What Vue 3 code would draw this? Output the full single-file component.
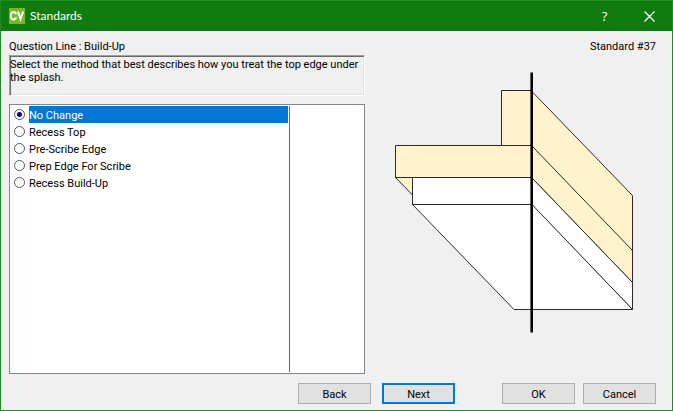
<script setup>
import { ref } from 'vue'

const options = [
  'No Change',
  'Recess Top',
  'Pre-Scribe Edge',
  'Prep Edge For Scribe',
  'Recess Build-Up',
]
const selected = ref('No Change')
</script>

<template>
  <div class="window">
    <header class="titlebar">
      <svg class="logo" viewBox="0 0 16 16" aria-hidden="true">
        <rect width="16" height="16" fill="#76b82a" />
        <path d="M7 6.200C6.700 4.700 5.900 4 4.700 4 2.700 4 1.800 5.400 1.800 7.700s.9 3.800 2.900 3.800c1.200 0 2-.7 2.300-2.200M8.900 3.500l2.600 7.600 2.600-7.600" fill="none" stroke="#fff" stroke-width="2" />
      </svg>
      <h1 class="title">Standards</h1>
      <button class="caption" type="button" aria-label="Help">?</button>
      <button class="caption" type="button" aria-label="Close">
        <svg class="close" viewBox="0 0 11 11" aria-hidden="true">
          <path d="M.5 .5l10 10M10.500 .5l-10 10" stroke="#fff" stroke-width="1.200" />
        </svg>
      </button>
    </header>

    <main class="content">
      <div class="heading">
        <span id="question">Question Line : Build-Up</span>
        <span>Standard #37</span>
      </div>

      <div class="columns">
        <section class="left">
          <p class="description">Select the method that best describes how you treat the top edge under the splash.</p>
          <div class="list">
            <div class="options" role="radiogroup" aria-labelledby="question">
              <label v-for="option in options" :key="option" class="option">
                <input v-model="selected" type="radio" name="method" :value="option" />
                <span class="text" :class="{ active: selected === option }">{{ option }}</span>
              </label>
            </div>
            <div class="divider"></div>
            <div class="values"></div>
          </div>
        </section>

        <section class="right">
          <svg class="diagram" viewBox="395 72 239 261" role="img" aria-label="Edge profile">
            <g stroke="#2a2a26" stroke-width="1" stroke-linejoin="round">
              <path d="M532 91.500L632.500 195.500V282.500L532 178Z" fill="#fff2cc" />
              <path d="M532 146L632.500 250.500" fill="none" />
              <path d="M532 178L632.500 282.500V309.500L532 205Z" fill="#fff" />
              <path d="M412.500 204.500H532L632.500 309.500H514Z" fill="#fff" />
              <path d="M395.500 177.500H412.500V195Z" fill="#fff2cc" />
              <path d="M412.500 177.500H532V204.500H412.500Z" fill="#fff" />
              <path d="M395.500 145.500H532V177.500H395.500Z" fill="#fff2cc" />
              <path d="M501.500 90.500H532V145.500H501.500Z" fill="#fff2cc" />
            </g>
            <path d="M531.700 72.500V332.500" stroke="#000" stroke-width="2.600" />
          </svg>
        </section>
      </div>

      <footer class="actions">
        <div class="group wide">
          <button class="btn" type="button">Back</button>
          <button class="btn primary" type="button">Next</button>
        </div>
        <div class="group">
          <button class="btn" type="button">OK</button>
          <button class="btn" type="button">Cancel</button>
        </div>
      </footer>
    </main>
  </div>
</template>

<style>
body {
  margin: 0;
}
</style>

<style scoped>
.window {
  box-sizing: border-box;
  min-height: 100vh;
  display: flex;
  flex-direction: column;
  border: 1px solid #228b22;
  background: #f0f0f0;
  color: #000;
  font: 11px/13px Tahoma, Roboto, sans-serif;
}
.titlebar {
  display: flex;
  align-items: center;
  height: 30px;
  padding-left: 8px;
  background: #107c10;
  color: #fff;
}
.logo {
  width: 16px;
  height: 16px;
}
.title {
  flex: 1;
  margin: 0 0 0 5px;
  font: 12px/16px Lato, "Open Sans", sans-serif;
}
.caption {
  display: flex;
  align-items: center;
  justify-content: center;
  width: 45px;
  height: 30px;
  padding: 0;
  border: 0;
  background: none;
  color: inherit;
  font: 13px/16px "Open Sans", "Noto Sans", sans-serif;
}
.close {
  width: 11px;
  height: 11px;
}
.content {
  flex: 1;
  display: flex;
  flex-direction: column;
  padding: 8px 16px 6px 8px;
}
.heading {
  display: flex;
  justify-content: space-between;
  line-height: 16px;
}
.columns {
  flex: 1;
  display: grid;
  grid-template-columns: 356fr 291fr;
}
.left {
  display: flex;
  flex-direction: column;
  gap: 8px;
}
.description {
  box-sizing: border-box;
  min-height: 41px;
  margin: 0;
  padding-top: 2px;
  border: 1px solid;
  border-color: #a0a0a0 #fff #fff #a0a0a0;
  box-shadow: inset 1px 1px #696969, inset -1px -1px #e3e3e3;
}
.list {
  flex: 1;
  display: flex;
  padding: 1px;
  border: 1px solid #828790;
  background: #fff;
}
.options {
  flex: 280;
}
.option {
  display: flex;
  align-items: center;
  height: 17px;
}
.option input {
  appearance: none;
  box-sizing: border-box;
  width: 11px;
  height: 11px;
  margin: 0 4px 0 3px;
  border: 1px solid #555;
  border-radius: 50%;
  background: #fff;
}
.option input:checked {
  background: radial-gradient(circle, #000080 0 2px, #fff 3px);
}
.text {
  flex: 1;
  margin-right: 1px;
  padding-top: 2px;
  line-height: 15px;
}
.active {
  background: #0078d7;
  color: #fff;
}
.divider {
  width: 1px;
  background: #696969;
}
.values {
  flex: 74;
}
.right {
  display: flex;
  justify-content: center;
  align-items: flex-start;
  padding: 17px 0 0 8px;
}
.diagram {
  width: 239px;
  max-width: 100%;
}
.actions {
  display: flex;
  justify-content: flex-end;
  gap: 47px;
  margin-top: 9px;
}
.group {
  display: flex;
  gap: 8px;
}
.wide {
  gap: 11px;
}
.btn {
  width: 73px;
  height: 21px;
  padding: 2px 0 0;
  border: 1px solid #adadad;
  background: #e1e1e1;
  color: #000;
  font: inherit;
}
.primary {
  border: 2px solid #0078d7;
}
</style>
